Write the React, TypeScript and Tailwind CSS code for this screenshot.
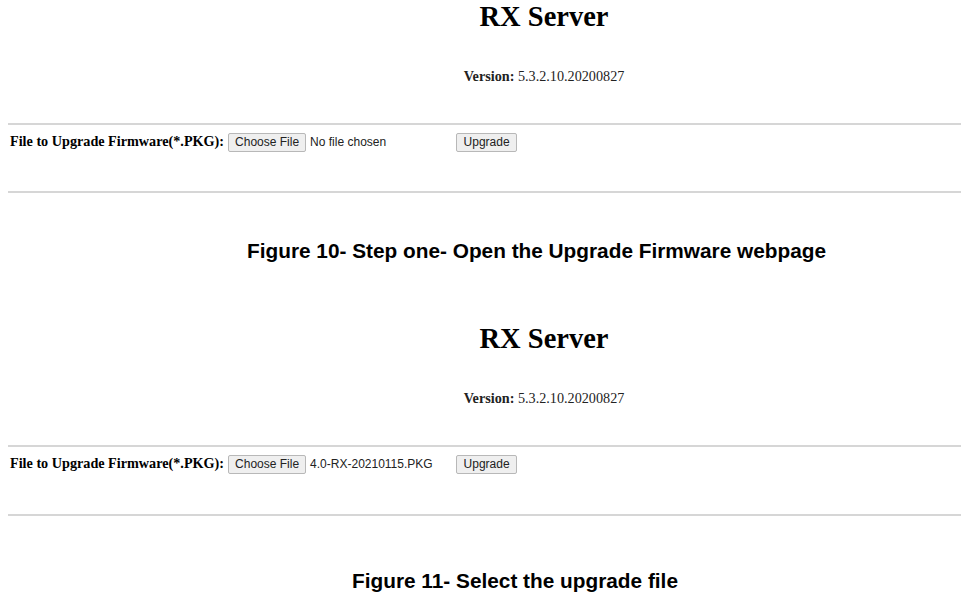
const FakeFile: React.FC<{ name: string }> = ({ name }) => (
  <span className="flex items-center w-[224px] shrink-0">
    <span className="h-[19px] px-[6px] flex items-center bg-[#efefef] border border-[#b8b8b8] rounded-[2px] text-[12px] text-[#222] font-['Liberation_Sans',Arial,sans-serif]">
      Choose File
    </span>
    <span className="ml-[4px] text-[12px] text-[#222] font-['Liberation_Sans',Arial,sans-serif]">
      {name}
    </span>
  </span>
);

const UpgradeBlock: React.FC<{ fileName: string }> = ({ fileName }) => (
  <div className="flex flex-col">
    <div className="pl-[127px] text-center h-[34px] leading-[34px] text-[28.5px] font-bold text-black font-['Liberation_Serif','Times_New_Roman',serif]">
      RX Server
    </div>
    <div className="pl-[127px] mt-[32px] text-center h-[20px] leading-[20px] text-[14.2px] text-[#222] font-['Liberation_Serif','Times_New_Roman',serif]">
      <b>Version:</b> 5.3.2.10.20200827
    </div>
    <div className="ml-[8px] mt-[37px] h-[2px] bg-[#d6d6d6]" />
    <div className="mt-[7px] h-[20px] flex items-center pl-[10px]">
      <span className="text-[14.2px] font-bold text-black font-['Liberation_Serif','Times_New_Roman',serif] mr-[4px]">
        File to Upgrade Firmware(*.PKG):
      </span>
      <FakeFile name={fileName} />
      <span className="ml-[4px] h-[19px] w-[61px] flex items-center justify-center bg-[#efefef] border border-[#b8b8b8] rounded-[2px] text-[12px] text-[#222] font-['Liberation_Sans',Arial,sans-serif]">
        Upgrade
      </span>
    </div>
  </div>
);

export default function App() {
  return (
    <div className="w-[961px] h-[601px] bg-white overflow-hidden flex flex-col">
      <UpgradeBlock fileName="No file chosen" />
      <div className="ml-[8px] mt-[39px] h-[2px] bg-[#d6d6d6]" />
      <div className="pl-[112px] mt-[46px] text-center h-[24px] leading-[24px] text-[20.8px] font-bold text-black font-['Liberation_Sans',Arial,sans-serif]">
        Figure 10- Step one- Open the Upgrade Firmware webpage
      </div>
      <div className="mt-[59px]">
        <UpgradeBlock fileName="4.0-RX-20210115.PKG" />
      </div>
      <div className="ml-[8px] mt-[40px] h-[2px] bg-[#d6d6d6]" />
      <div className="pl-[69px] mt-[53px] text-center h-[24px] leading-[24px] text-[20.8px] font-bold text-black font-['Liberation_Sans',Arial,sans-serif]">
        Figure 11- Select the upgrade file
      </div>
    </div>
  );
}
